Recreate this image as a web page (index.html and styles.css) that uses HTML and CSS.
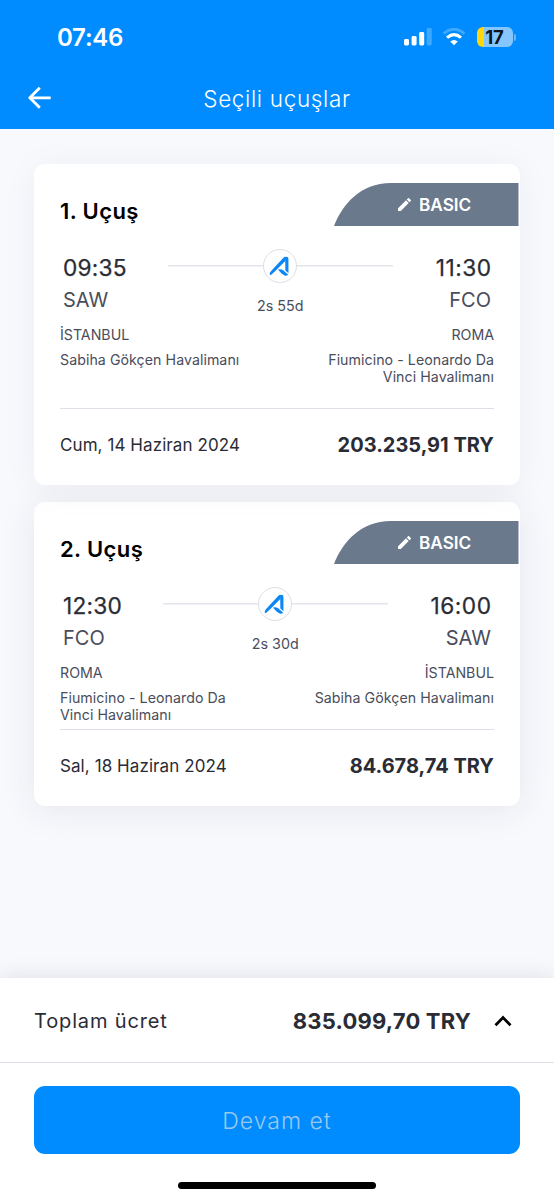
FILE: index.html
```html
<!DOCTYPE html>
<html lang="tr">
<head>
<meta charset="utf-8">
<title>Seçili uçuşlar</title>
<link rel="stylesheet" href="styles.css">
</head>
<body>
<svg class="defs" width="0" height="0">
  <symbol id="airline" viewBox="1.5 1.5 31 31">
    <path d="M7 25.4 Q6.9 23.4 8.4 21.8 L20.3 9 Q22.2 7.4 23 8.6 L21.9 12.4 L12.2 22 L8.3 25.6 Z" fill="#0b86f5"/>
    <path d="M22.3 8.2 Q25.2 7.6 25.2 10.2 V24 L22.2 21.4 L22 10.5 Z" fill="#0b86f5"/>
    <path d="M15 20.3 Q18 19.6 20 21 L25 25.4 Q22.9 27.4 20.6 25.8 L18.3 24 Z" fill="#0b86f5"/>
  </symbol>
  <symbol id="pencil" viewBox="3 3 18 18">
    <path d="M3 17.46v3.04c0 .28.22.5.5.5h3.04c.13 0 .26-.05.35-.15L17.81 9.94l-3.75-3.75L3.15 17.1c-.1.1-.15.22-.15.36zM20.71 7.04a1 1 0 0 0 0-1.41l-2.34-2.34a1 1 0 0 0-1.41 0l-1.83 1.83 3.75 3.75 1.83-1.83z" fill="#fff"/>
  </symbol>
</svg>
<div class="screen">
  <header class="header">
    <div class="status">
      <span class="clock">07:46</span>
      <div class="indicators">
        <svg class="signal" width="28" height="18" viewBox="0 0 28 18">
          <rect x="0" y="11" width="5" height="6.5" rx="1.4" fill="#fff"/>
          <rect x="7.6" y="8" width="5" height="9.5" rx="1.4" fill="#fff"/>
          <rect x="15.2" y="4" width="5" height="13.5" rx="1.4" fill="#fff"/>
          <rect x="22.7" y="0" width="5" height="17.5" rx="1.4" fill="#3fa8ff"/>
        </svg>
        <svg class="wifi" width="24" height="18" viewBox="0 0 24 18">
          <path d="M1.6 5.6 Q12 -3 22.4 5.6" fill="none" stroke="#3fa8ff" stroke-width="3"/>
          <path d="M5 9.6 Q12 3.6 19 9.6" fill="none" stroke="#fff" stroke-width="3.2"/>
          <path d="M8.2 13.6 Q12 10.4 15.8 13.6 L12 17.2 Z" fill="#fff"/>
        </svg>
        <div class="battery"><span class="level">17</span></div>
        <span class="battery-cap"></span>
      </div>
    </div>
    <div class="titlebar">
      <svg class="back" width="24" height="24" viewBox="0 0 24 24">
        <path d="M22.7 11.8H2.2M11.8 1.8L1.8 11.8L11.8 21.8" fill="none" stroke="#fff" stroke-width="2.8" stroke-linejoin="round"/>
      </svg>
      <h1 class="page-title">Seçili uçuşlar</h1>
    </div>
  </header>

  <main class="content">
    <section class="card raised">
      <div class="card-head">
        <h2 class="card-title">1. Uçuş</h2>
        <div class="tag">
          <svg class="tag-bg" width="185" height="43" viewBox="0 0 185 43"><path d="M0 43C8 22 26 0 57 0H184.5V43Z" fill="#6b798d"/></svg>
          <svg class="pencil" width="13" height="13"><use href="#pencil"/></svg>
          <span>BASIC</span>
        </div>
      </div>
      <div class="route">
        <div class="stop"><div class="time">09:35</div><div class="code">SAW</div></div>
        <div class="path">
          <div class="track"><svg class="badge" width="34" height="34"><use href="#airline"/></svg></div>
          <div class="duration">2s 55d</div>
        </div>
        <div class="stop end"><div class="time arrival">11:30</div><div class="code">FCO</div></div>
      </div>
      <div class="places roomy">
        <div class="place"><div class="city">İSTANBUL</div><div class="airport">Sabiha Gökçen Havalimanı</div></div>
        <div class="place end"><div class="city">ROMA</div><div class="airport">Fiumicino - Leonardo Da<br>Vinci Havalimanı</div></div>
      </div>
      <div class="card-foot">
        <span class="date">Cum, 14 Haziran 2024</span>
        <span class="price">203.235,91 TRY</span>
      </div>
    </section>

    <section class="card">
      <div class="card-head">
        <h2 class="card-title">2. Uçuş</h2>
        <div class="tag">
          <svg class="tag-bg" width="185" height="43" viewBox="0 0 185 43"><path d="M0 43C8 22 26 0 57 0H184.5V43Z" fill="#6b798d"/></svg>
          <svg class="pencil" width="13" height="13"><use href="#pencil"/></svg>
          <span>BASIC</span>
        </div>
      </div>
      <div class="route">
        <div class="stop"><div class="time">12:30</div><div class="code">FCO</div></div>
        <div class="path">
          <div class="track"><svg class="badge" width="34" height="34"><use href="#airline"/></svg></div>
          <div class="duration">2s 30d</div>
        </div>
        <div class="stop end"><div class="time arrival">16:00</div><div class="code">SAW</div></div>
      </div>
      <div class="places">
        <div class="place"><div class="city">ROMA</div><div class="airport">Fiumicino - Leonardo Da<br>Vinci Havalimanı</div></div>
        <div class="place end"><div class="city">İSTANBUL</div><div class="airport">Sabiha Gökçen Havalimanı</div></div>
      </div>
      <div class="card-foot">
        <span class="date">Sal, 18 Haziran 2024</span>
        <span class="price">84.678,74 TRY</span>
      </div>
    </section>
  </main>

  <footer class="footer">
    <div class="total">
      <span class="total-label">Toplam ücret</span>
      <span class="total-price">835.099,70 TRY</span>
      <svg class="chevron" width="18" height="12" viewBox="0 0 18 12"><path d="M1.5 10.2L9 2.6L16.5 10.2" fill="none" stroke="#000" stroke-width="2.8"/></svg>
    </div>
    <div class="action"><button class="continue">Devam et</button></div>
    <div class="home"></div>
  </footer>
</div>
</body>
</html>
```

FILE: styles.css
```css
* { box-sizing: border-box; }
body { margin: 0; font-family: Inter, sans-serif; color: #2a2c35; }
h1, h2 { margin: 0; }
.defs { position: absolute; }
.screen { width: 554px; height: 1200px; display: flex; flex-direction: column; background: #f8f9fd; overflow: hidden; }

.header { height: 129px; flex: none; background: #008cff; color: #fff; }
.status { height: 67px; padding: 7px 38px 0 57px; display: flex; align-items: center; justify-content: space-between; }
.clock { font-size: 24px; font-weight: 600; letter-spacing: -0.25px; }
.indicators { display: flex; align-items: center; }
.signal { margin-right: 10px; }
.wifi { margin-right: 11px; }
.battery { width: 36px; height: 20px; border-radius: 6px; background: linear-gradient(90deg, #ffd60a 6.5px, #85c6ff 6.5px); text-align: center; }
.level { display: block; font-size: 18.5px; font-weight: 700; line-height: 20px; color: #10151d; padding-right: 1px; }
.battery-cap { width: 2px; height: 7px; margin-left: 1px; border-radius: 0 2px 2px 0; background: #66b8ff; }
.titlebar { height: 62px; display: grid; grid-template-columns: 100px 1fr 100px; align-items: center; }
.back { margin-left: 28px; }
.page-title { font-size: 22.5px; font-weight: 300; letter-spacing: 0.65px; text-align: center; }

.content { flex: 1; padding: 35px 34px 0; display: flex; flex-direction: column; gap: 17px; }
.card { background: #fff; border-radius: 11px; padding: 19px 26px 0; box-shadow: 0 4px 36px rgba(40, 45, 60, 0.085); }
.card.raised { position: relative; z-index: 1; box-shadow: 0 4px 36px rgba(40, 45, 60, 0.05); }
.card-head { height: 60px; display: flex; justify-content: space-between; align-items: flex-start; margin-right: -25px; }
.card-title { font-size: 22px; font-weight: 600; letter-spacing: 0.4px; line-height: 28px; color: #000; padding-top: 14px; }
.tag { position: relative; width: 185px; height: 43px; padding-left: 64px; display: flex; align-items: center; gap: 8px; color: #fff; font-size: 17.2px; font-weight: 600; }
.tag-bg { position: absolute; left: 0; top: 0; }
.pencil, .tag span { position: relative; }

.route { height: 80px; padding: 9px 3px 0; display: flex; justify-content: space-between; }
.stop.end, .place.end { text-align: right; }
.time { font-size: 22.7px; line-height: 32px; font-weight: 400; letter-spacing: 0.2px; -webkit-text-stroke: 0.25px; }
.time.arrival { letter-spacing: 0.5px; margin-right: -0.5px; }
.code { font-size: 20px; line-height: 32px; color: #4a4d5b; }
.path { width: 225px; text-align: center; margin: 0 1px 0 -1px; }
.track { height: 34px; margin-top: -3px; display: flex; justify-content: center; background: linear-gradient(#e4e4eb, #e4e4eb) 0 16px / 100% 1.5px no-repeat; }
.badge { border: 1.5px solid #dedee6; border-radius: 50%; background: #fff; }
.duration { margin-top: 14px; font-size: 14.3px; line-height: 18px; color: #4a4d5b; }

.places { height: 69px; padding-top: 2px; display: flex; justify-content: space-between; border-bottom: 1.5px solid #dedee6; color: #4a4d5b; font-size: 14.2px; }
.places.roomy { height: 86px; }
.city { line-height: 20px; }
.airport { margin-top: 6px; line-height: 17px; letter-spacing: 0.05px; }
.card-foot { height: 76px; padding-bottom: 4px; display: flex; align-items: center; justify-content: space-between; }
.date { font-size: 17px; letter-spacing: 0.08px; }
.price { font-size: 20px; font-weight: 700; }

.footer { height: 222px; flex: none; background: #fff; box-shadow: 0 -3px 18px rgba(40, 45, 60, 0.1); }
.total { height: 85px; padding: 2px 42px 0 34px; display: flex; align-items: center; border-bottom: 1.5px solid #dedee6; }
.total-label { font-size: 20px; letter-spacing: 0.85px; }
.total-price { margin-left: auto; margin-right: 23px; font-size: 22px; font-weight: 700; letter-spacing: 0.2px; }
.action { padding: 23px 34px 0; }
.continue { display: block; width: 100%; height: 68px; padding: 2px 0 0; border: 0; border-radius: 11px; background: #008cff; color: #9ac8ec; font-family: Inter, sans-serif; font-size: 23px; font-weight: 300; letter-spacing: 1px; }
.home { width: 198px; height: 7px; margin: 27.5px auto 0; border-radius: 4px; background: #000; }
```
